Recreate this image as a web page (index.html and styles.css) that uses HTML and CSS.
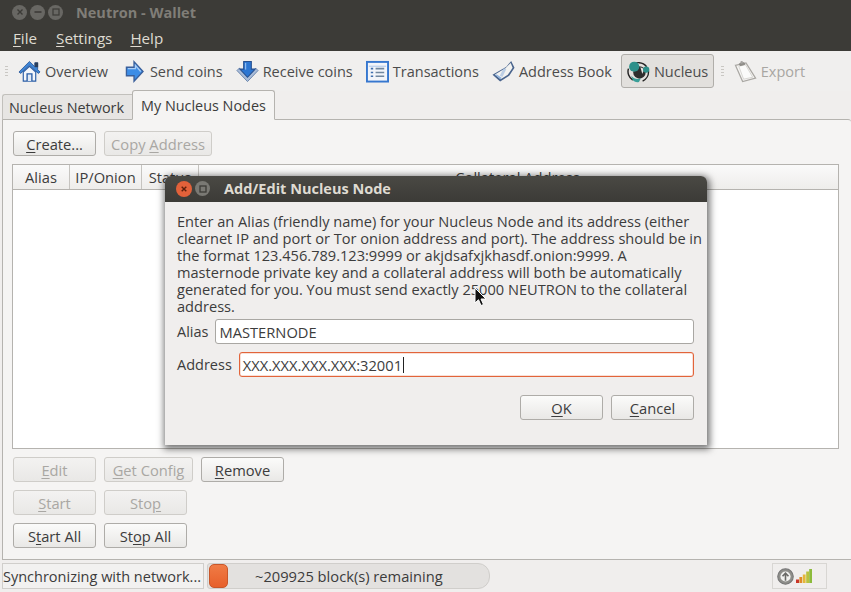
FILE: index.html
```html
<!DOCTYPE html>
<html lang="en">
<head>
<meta charset="utf-8">
<title>Neutron - Wallet</title>
<link rel="stylesheet" href="styles.css">
</head>
<body>
<div class="app">
  <header class="titlebar">
    <div class="wm">
      <span class="wm-btn"><svg viewBox="0 0 14 14" width="14" height="14"><path d="M4.500 4.500l5 5M9.500 4.500l-5 5" stroke="#3c3b37" stroke-width="1.400"/></svg></span>
      <span class="wm-btn"><svg viewBox="0 0 14 14" width="14" height="14"><path d="M3.500 7h7" stroke="#3c3b37" stroke-width="1.600"/></svg></span>
      <span class="wm-btn"><svg viewBox="0 0 14 14" width="14" height="14"><rect x="4" y="4" width="6" height="6" fill="none" stroke="#3c3b37" stroke-width="1.200"/></svg></span>
    </div>
    <span class="title-text">Neutron - Wallet</span>
  </header>
  <nav class="menubar">
    <span class="menu-item"><u>F</u>ile</span>
    <span class="menu-item"><u>S</u>ettings</span>
    <span class="menu-item"><u>H</u>elp</span>
  </nav>
  <div class="toolbar">
    <span class="grip"></span>
    <span class="tool tool-home">
      <svg class="ticon" viewBox="0 0 24 24"><path d="M5.500 12.500V22h13v-9.500L12 6.500z" fill="#f3f6fa" stroke="#2a5da6" stroke-width="1.200"/><path d="M9.500 22v-7.500h5V22" fill="#dfe9f5" stroke="#2a5da6" stroke-width="1.400"/><path d="M1 12.500L12 1.500l5.500 5.500V3h3v7l2.500 2.500-1.800 1.500L12 5.500 2.800 14z" fill="#3f86d6" stroke="#1f4f93" stroke-width=".8"/><rect x="17.500" y="2.500" width="3.500" height="5" fill="#2b3f5c"/></svg>
      Overview</span>
    <span class="tool">
      <svg class="ticon ic-send" viewBox="0 0 20 24"><path d="M1.500 7.500h8V1.800L19 12l-9.500 10.200v-5.700h-8z" fill="#3d8de6" stroke="#3a5f9a" stroke-width="1.400"/><path d="M3 9h8V5.500l5.500 6.500" fill="none" stroke="#a9cdf5" stroke-width="1.300"/></svg>
      Send coins</span>
    <span class="tool">
      <svg class="ticon" viewBox="0 0 24 24"><path d="M1 11l2.500-2.500L12 17l8.500-8.500L23 11 12 22.500z" fill="#a9bcd8" stroke="#5d7ba6" stroke-width=".9"/><path d="M8 1.500h8v8h4L12 18 4 9.500h4z" fill="#2c76d2" stroke="#27508f" stroke-width="1.100"/><path d="M10 3v7" stroke="#8dbbf0" stroke-width="1.300"/></svg>
      Receive coins</span>
    <span class="tool">
      <svg class="ticon" viewBox="0 0 24 24"><rect x="1" y="2" width="22" height="20.500" fill="#f2f5fa" stroke="#3677cf" stroke-width="2"/><path d="M3 6.500h18" stroke="#a9c4e8" stroke-width="1"/><path d="M5 9h2.500M5 13h2.500M5 17h2.500" stroke="#3f6fae" stroke-width="1.600"/><path d="M10 9h9M10 13h9M10 17h9" stroke="#71889f" stroke-width="1.600"/></svg>
      Transactions</span>
    <span class="tool">
      <svg class="ticon" viewBox="0 0 24 24"><path d="M.5 15.500L15 7 20 1l3.500 7-5.500 8.500-9.500 6z" fill="#49648d"/><path d="M3 15l11-6.500L19.500 3l2 5-5 7.500L9 20z" fill="#f2f2f0"/><path d="M3 15.500L9 20l1-1.500L5 15z" fill="#8fb2dd"/><path d="M9.500 17l4-8" fill="none" stroke="#a5bfe0" stroke-width="3" opacity=".7"/></svg>
      Address Book</span>
    <span class="tool tool-on">
      <svg class="ticon" viewBox="0 0 24 24"><path d="M4.500 6a10.500 10.500 0 0 1 16 1M22.300 11a10.500 10.500 0 0 1-6 11M6 21a10.500 10.500 0 0 1-4.500-12" fill="none" stroke="#222" stroke-width="1.500"/><circle cx="13" cy="13" r="6.500" fill="#2e2e2e"/><path d="M14 7.500l4 2-2 5z" fill="#e6e6e4"/><circle cx="7.500" cy="7" r="5.300" fill="#2d908a"/><circle cx="20" cy="10" r="3.300" fill="#2d908a"/><path d="M4.500 16.500c3 3.500 6.500 4 10 2.500l-2 4c-4 1-7-1-8-6.500z" fill="#3a9f98"/></svg>
      Nucleus</span>
    <span class="grip grip-mid"></span>
    <span class="tool tool-off">
      <svg class="ticon" viewBox="0 0 24 24"><path d="M1.500 5.500L12.500 3l10 16L9 22.500z" fill="#f6f5f3" stroke="#a9a7a3" stroke-width="1.300"/><path d="M5 6.500l7-1.500 7.500 13L10 20z" fill="#fbfbfa" stroke="#cfcdc9" stroke-width=".8"/><path d="M5.500 4l5-1.200.8 1.800-5 1.300z" fill="#8f8d89" stroke="#8f8d89"/><circle cx="8" cy="2.500" r="1.400" fill="#a5a3a0"/></svg>
      Export</span>
  </div>
  <div class="tabs">
    <span class="tab">Nucleus Network</span>
    <span class="tab tab-on">My Nucleus Nodes</span>
  </div>
  <main class="pane">
    <div class="row">
      <button class="btn w83"><u>C</u>reate...</button>
      <button class="btn off w108">Copy <u>A</u>ddress</button>
    </div>
    <div class="table">
      <div class="thead">
        <span class="th th-alias">Alias</span>
        <span class="th th-ip">IP/Onion</span>
        <span class="th th-stat">Status</span>
        <span class="th th-addr">Collateral Address</span>
      </div>
    </div>
    <div class="row">
      <button class="btn off w83"><u>E</u>dit</button>
      <button class="btn off w89"><u>G</u>et Config</button>
      <button class="btn w83"><u>R</u>emove</button>
    </div>
    <div class="row">
      <button class="btn off w83"><u>S</u>tart</button>
      <button class="btn off w83">Sto<u>p</u></button>
    </div>
    <div class="row">
      <button class="btn w83">S<u>t</u>art All</button>
      <button class="btn w83">St<u>o</u>p All</button>
    </div>
  </main>
  <footer class="status">
    <span class="st-msg">Synchronizing with network...</span>
    <div class="st-prog"><span class="chunk"></span><span class="st-text">~209925 block(s) remaining</span></div>
    <div class="st-icons">
      <svg viewBox="0 0 16 16" width="17" height="17"><circle cx="8" cy="8" r="7.300" fill="#8e8e8a" stroke="#777"/><circle cx="8" cy="8" r="4.800" fill="#f2f2f0"/><path d="M8 12V5M5.200 7.800L8 4.800l2.800 3" fill="none" stroke="#6a6a67" stroke-width="1.500"/></svg>
      <svg viewBox="0 0 16 16" width="16" height="16"><rect x="0" y="11.500" width="3" height="3.500" fill="#c8352a"/><rect x="3.400" y="9" width="2.800" height="6" fill="#e08a2a"/><rect x="6.800" y="6.500" width="2.800" height="8.500" fill="#e4b83a"/><rect x="10.200" y="3.500" width="2.800" height="11.500" fill="#b9c23f"/><rect x="13.200" y="1" width="2.800" height="14" fill="#8cbb3c"/></svg>
    </div>
  </footer>

  <section class="dialog">
    <div class="dlg-title">
      <span class="dlg-close"><svg viewBox="0 0 14 14" width="14" height="14"><path d="M4.700 4.700l4.600 4.600M9.300 4.700l-4.600 4.600" stroke="#5c1f0c" stroke-width="1.400"/></svg></span>
      <span class="dlg-max"><svg viewBox="0 0 14 14" width="14" height="14"><rect x="4" y="4" width="6" height="6" fill="none" stroke="#3c3b37" stroke-width="1.300"/></svg></span>
      <span class="dlg-name">Add/Edit Nucleus Node</span>
    </div>
    <div class="dlg-body">
      <p class="dlg-text">Enter an Alias (friendly name) for your Nucleus Node and its address (either<br>clearnet IP and port or Tor onion address and port). The address should be in<br>the format 123.456.789.123:9999 or akjdsafxjkhasdf.onion:9999. A<br>masternode private key and a collateral address will both be automatically<br>generated for you. You must send exactly 25000 NEUTRON to the collateral<br>address.</p>
      <div class="field"><label class="lbl">Alias</label><span class="input">MASTERNODE</span></div>
      <div class="field field-on"><label class="lbl">Address</label><span class="input input-on">XXX.XXX.XXX.XXX:32001<i class="caret"></i></span></div>
      <div class="dlg-btns">
        <button class="btn w83"><u>O</u>K</button>
        <button class="btn w83"><u>C</u>ancel</button>
      </div>
    </div>
  </section>
  <svg class="cursor" viewBox="0 0 13 20" width="13" height="20"><path d="M1 1v15l3.500-3.300L7 18.500l2.500-1-2.500-5.500h5z" fill="#111" stroke="#fff" stroke-width="1"/></svg>
</div>
</body>
</html>
```
FILE: styles.css
```css
* { box-sizing: border-box; }
html, body { margin: 0; padding: 0; }
body { width: 851px; height: 592px; overflow: hidden; font-family: "Open Sans", "Noto Sans", sans-serif; font-size: 14.700px; color: #3c3c3c; background: #f0eeed; }
u { text-underline-offset: 2px; text-decoration-thickness: 1px; }
.app { position: relative; width: 851px; height: 592px; display: flex; flex-direction: column; }

.titlebar { height: 24px; margin-bottom: 1px; background: #3c3b37; display: flex; align-items: center; padding-left: 12px; flex: none; box-shadow: 0 1px 0 #3c3b37; }
.wm { display: flex; gap: 3px; }
.wm-btn { width: 15px; height: 15px; border-radius: 50%; background: #686763; display: flex; align-items: center; justify-content: center; }
.title-text { margin-left: 13px; color: #807e78; font-weight: 700; font-size: 14.500px; }

.menubar { height: 26px; background: #3c3b37; display: flex; align-items: center; padding-left: 4px; flex: none; color: #dfdbd2; }
.menu-item { padding: 0 9px; font-size: 15.200px; }
.menu-item:nth-child(2) { margin-left: 1px; }

.toolbar { height: 40px; display: flex; align-items: center; padding-left: 5px; flex: none; color: #4c4c4c; background: #f0efee; font-size: 14.500px; }
.grip { width: 3px; height: 11px; margin-right: 3.500px; background: repeating-linear-gradient(#c9c7c3 0 1px, transparent 1px 3px); }
.grip-mid { margin: 0 3px 0 7px; }
.tool { display: flex; align-items: center; gap: 4px; padding: 0 6.500px; height: 34px; white-space: nowrap; }
.tool-home { padding-right: 10.500px; }
.ticon { width: 23px; height: 23px; flex: none; }
.ic-send { width: 19px; margin-right: 2px; }
.tool-on { background: #e2e0dd; border: 1px solid #b0aeaa; border-radius: 3px; padding: 0 5px; margin-left: 2.500px; }
.tool-off { color: #a8a6a2; }

.tabs { height: 29px; display: flex; align-items: flex-end; padding-left: 2px; flex: none; position: relative; z-index: 1; margin-bottom: -1px; font-size: 14.400px; }
.tab { padding: 0 8px 0 6px; display: flex; align-items: center; border: 1px solid #c2c0bc; border-bottom-color: #b5b3af; background: #e7e5e3; border-radius: 3px 0 0 0; border-right: 0; height: 26px; }
.tab-on { height: 30px; padding: 1px 8px 0; background: #f5f4f3; border: 1px solid #b5b3af; border-bottom-color: #f5f4f3; border-radius: 3px 3px 0 0; }

.pane { flex: 1; margin-left: 2px; border: 1px solid #b5b3af; border-right: 0; border-radius: 0 3px 0 0; background: #f5f4f3; padding: 11px 12px 11px 10px; display: flex; flex-direction: column; gap: 8px; min-height: 0; }
.row { display: flex; gap: 8px; flex: none; }
.btn { height: 25px; border: 1px solid #aeaca8; border-radius: 3px; background: linear-gradient(#fbfbfa, #e9e8e6); font: inherit; color: #3c3c3c; padding: 0; }
.btn.off { color: #a9a7a3; border-color: #cfcdc9; background: linear-gradient(#f3f2f1, #e9e8e6); }
.w83 { width: 83px; }
.w89 { width: 89px; }
.w108 { width: 108px; }

.table { flex: 1; border: 1px solid #b5b3af; background: #fff; margin-left: -1px; }
.thead { height: 25px; display: flex; background: linear-gradient(#fafafa, #eeedeb); border-bottom: 1px solid #b5b3af; }
.th { display: flex; align-items: center; justify-content: center; border-right: 1px solid #c6c4c0; white-space: nowrap; }
.th-alias { width: 57px; }
.th-ip { width: 72px; }
.th-stat { width: 57px; }
.th-addr { flex: 1; border-right: 0; padding-right: 2px; }

.status { height: 32px; display: flex; align-items: center; padding: 0 0 0 2px; flex: none; background: #f0eeed; }
.st-msg { width: 202px; height: 26px; border: 1px solid #d0cecb; display: flex; align-items: center; white-space: nowrap; background: #f2f1f0; font-size: 14.500px; }
.st-prog { margin-left: 3px; width: 283px; height: 26px; border: 1px solid #d0cecb; border-radius: 3px 12px 12px 3px; background: #e3e1df; display: flex; align-items: center; }
.chunk { width: 19px; height: 24px; margin-left: 1px; background: linear-gradient(#f07b45, #e7602b); border-radius: 5px; border: 1px solid #c9572a; flex: none; }
.st-text { margin-left: 27px; }
.st-icons { margin-left: 282px; width: 55px; height: 26px; border: 1px solid #d8d6d3; display: flex; align-items: center; padding-left: 4px; gap: 2px; }

.dialog { position: absolute; left: 165px; top: 176px; width: 542px; height: 269px; background: #f0eeed; box-shadow: 1px 2px 7px 2px rgba(0,0,0,.55); border-radius: 6px 6px 0 0; z-index: 5; display: flex; flex-direction: column; }
.dlg-title { height: 25px; margin-bottom: 1px; flex: none; background: linear-gradient(#4a4944, #3c3b37); border-radius: 6px 6px 0 0; display: flex; align-items: center; padding-left: 11px; box-shadow: 0 1px 0 #3c3b37; }
.dlg-close { width: 16px; height: 16px; border-radius: 50%; background: #e2613a; display: flex; align-items: center; justify-content: center; }
.dlg-max { width: 15px; height: 15px; border-radius: 50%; background: #7a7974; display: flex; align-items: center; justify-content: center; margin-left: 3px; }
.dlg-name { margin-left: 14px; color: #dfdbd2; font-weight: 700; font-size: 14.500px; }
.dlg-body { padding: 11px 13px 0 12px; flex: 1; display: flex; flex-direction: column; }
.dlg-text { margin: 0 0 4px; font-size: 14.600px; line-height: 17px; white-space: nowrap; }
.lbl { font-size: 14.500px; }
.field { display: flex; align-items: center; gap: 7px; height: 25px; }
.field-on { margin-top: 8px; }
.input { flex: 1; height: 25px; background: #fff; border: 1px solid #a9a7a3; border-radius: 3px; display: flex; align-items: center; padding-left: 3px; color: #3c3c3c; }
.input-on { border-color: #e2643a; box-shadow: inset 0 0 0 .5px rgba(226,100,58,.4); }
.caret { width: 1px; height: 16px; background: #222; margin-left: 1px; }
.dlg-btns { display: flex; justify-content: flex-end; gap: 8px; margin-top: 18px; }
.cursor { position: absolute; left: 474px; top: 287px; z-index: 6; }
```
